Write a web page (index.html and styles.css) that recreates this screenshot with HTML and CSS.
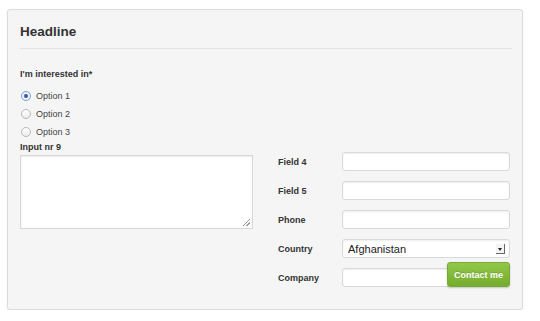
FILE: index.html
```html
<!DOCTYPE html>
<html lang="en">
<head>
    <meta charset="UTF-8">
    <title>Contact form</title>
    <link rel="stylesheet" href="styles.css">
</head>
<body>
    <div class="panel">
        <h2 class="headline">Headline</h2>

        <div class="interest">
            <p class="label">I'm interested in*</p>
            <label class="option"><input type="radio" name="opt" checked> Option 1</label>
            <label class="option"><input type="radio" name="opt"> Option 2</label>
            <label class="option"><input type="radio" name="opt"> Option 3</label>
        </div>

        <div class="form-grid">
            <div class="left-col">
                <p class="label">Input nr 9</p>
                <div class="textarea"><span class="grip"></span></div>
            </div>
            <div class="right-col">
                <div class="field"><span class="label">Field 4</span><div class="input"></div></div>
                <div class="field"><span class="label">Field 5</span><div class="input"></div></div>
                <div class="field"><span class="label">Phone</span><div class="input"></div></div>
                <div class="field">
                    <span class="label">Country</span>
                    <div class="input select">Afghanistan<span class="arrow"></span></div>
                </div>
                <div class="field">
                    <span class="label">Company</span>
                    <div class="input company"><button class="contact">Contact me</button></div>
                </div>
            </div>
        </div>
    </div>
</body>
</html>
```

FILE: styles.css
```css
body {
    margin: 0;
    background: #fff;
    font-family: "Liberation Sans", Arial, sans-serif;
    color: #333;
}

.panel {
    box-sizing: border-box;
    margin: 9px 0 0 7px;
    width: 516px;
    height: 301px;
    padding: 13px 10px 0 12px;
    background: #f5f5f5;
    border: 1px solid #dcdcdc;
    border-radius: 3px;
    box-shadow: 0 1px 2px rgba(0,0,0,0.08);
}

.headline {
    margin: 0;
    font-size: 13.5px;
    line-height: 18px;
    font-weight: bold;
    color: #333;
    padding-bottom: 7px;
    border-bottom: 1px solid #e2e2e2;
}

.label {
    margin: 0;
    font-size: 9px;
    font-weight: bold;
    line-height: 12px;
    color: #333;
}

.interest {
    padding-top: 19px;
}

.interest .label {
    margin-bottom: 7px;
}

.option {
    display: flex;
    align-items: center;
    height: 18px;
    font-size: 9px;
    color: #444;
}

.option input {
    appearance: none;
    -webkit-appearance: none;
    box-sizing: border-box;
    width: 10px;
    height: 10px;
    margin: 0 5px 0 1px;
    border: 1px solid #b9b9b9;
    border-radius: 50%;
    background: linear-gradient(#fff, #ececec);
    display: grid;
    place-items: center;
}

.option input:checked {
    border-color: #7d9fd0;
    background: #eef3fb;
}

.option input:checked::after {
    content: '';
    width: 4px;
    height: 4px;
    border-radius: 50%;
    background: #34579a;
}

.form-grid {
    display: grid;
    grid-template-columns: 233px 1fr;
    column-gap: 25px;
    margin-top: 0;
}

.left-col .label {
    margin-bottom: 2px;
}

.textarea {
    position: relative;
    height: 72px;
    background: #fff;
    border: 1px solid #d8d8d8;
    box-shadow: inset 0 1px 2px rgba(0,0,0,0.08);
}

.grip {
    position: absolute;
    right: 2px;
    bottom: 2px;
    width: 7px;
    height: 7px;
    background: linear-gradient(135deg, transparent 45%, #999 45%, #999 55%, transparent 55%, transparent 70%, #999 70%, #999 80%, transparent 80%);
}

.right-col {
    display: flex;
    flex-direction: column;
    gap: 10px;
    padding-top: 11px;
}

.field {
    display: grid;
    grid-template-columns: 64px 168px;
    align-items: center;
}

.input {
    box-sizing: border-box;
    height: 19px;
    background: #fff;
    border: 1px solid #d9d9d9;
    border-radius: 3px;
    box-shadow: inset 0 1px 2px rgba(0,0,0,0.07);
}

.select {
    position: relative;
    display: flex;
    align-items: center;
    padding-left: 5px;
    font-size: 11px;
    color: #222;
}

.arrow {
    position: absolute;
    right: 4px;
    top: 4px;
    width: 8px;
    height: 9px;
    border-right: 1px solid #666;
    border-bottom: 1px solid #666;
    background: #f4f4f4;
}

.arrow::after {
    content: '';
    position: absolute;
    left: 2px;
    top: 4px;
    border-left: 2px solid transparent;
    border-right: 2px solid transparent;
    border-top: 3px solid #222;
}

.company {
    position: relative;
}

.contact {
    position: absolute;
    right: -1px;
    top: -7px;
    width: 63px;
    height: 25px;
    padding: 0;
    border: 1px solid #77a934;
    border-radius: 3px;
    background: linear-gradient(#92c84a, #74ac2e);
    color: #fff;
    font-family: "Liberation Sans", Arial, sans-serif;
    font-size: 9px;
    font-weight: bold;
    text-shadow: 0 -1px 0 rgba(0,0,0,0.15);
    box-shadow: 0 1px 2px rgba(0,0,0,0.2);
}
```
